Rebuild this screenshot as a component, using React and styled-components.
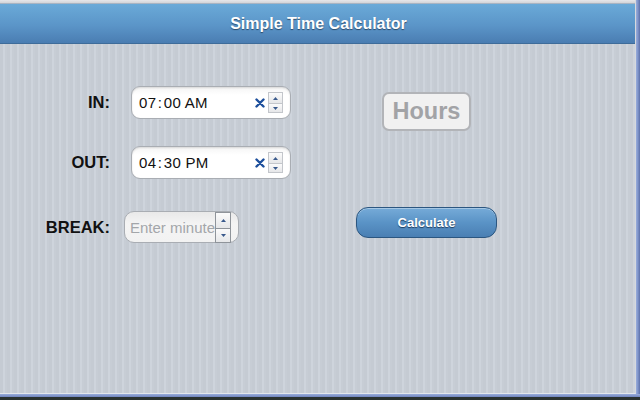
import React from "react";
import styled, { createGlobalStyle } from "styled-components";

const Global = createGlobalStyle`
  html, body { margin: 0; padding: 0; width: 640px; height: 400px; overflow: hidden; }
  body { font-family: "Liberation Sans", Arial, sans-serif; }
`;

const Page = styled.div`
  width: 640px;
  height: 400px;
  display: flex;
  flex-direction: column;
  background: #2c3433;
`;

const Window = styled.div`
  flex: 1;
  display: flex;
  min-height: 0;
`;

const Content = styled.div`
  flex: 1;
  display: flex;
  flex-direction: column;
  border-right: 1px solid #d6d9de;
  border-bottom: 1px solid #e4e7ec;
`;

const RightFrame = styled.div`
  width: 4px;
  background: linear-gradient(90deg, #9aaedb 0, #7d93c9 50%, #5d70a8 100%);
`;

const BottomFrame = styled.div`
  height: 3px;
  background: linear-gradient(180deg, #9aaedb, #6f83bd);
`;

const Taskbar = styled.div`
  height: 3px;
  background: #2a3230;
`;

const TopStrip = styled.div`
  height: 4px;
  background: linear-gradient(180deg, #e6e7e9, #d2d4d8);
  border-bottom: 1px solid #a8b4c2;
  box-sizing: border-box;
`;

const Header = styled.header`
  height: 40px;
  display: flex;
  align-items: center;
  justify-content: center;
  background: linear-gradient(180deg, #6aaad8 0%, #5b95c8 55%, #4a7db2 100%);
  border-bottom: 1px solid #3e6c9a;
  box-sizing: border-box;
  color: #fff;
  font-weight: bold;
  font-size: 16px;
  text-shadow: 0 1px 1px #2a4a6a;
  padding-left: 2px;
`;

const Body = styled.main`
  flex: 1;
  display: flex;
  background: repeating-linear-gradient(
    90deg,
    #c5cbd3 0px,
    #c5cbd3 3px,
    #ced4dc 3px,
    #ced4dc 5px,
    #c7cdd5 5px,
    #c7cdd5 7px
  );
`;

const Form = styled.div`
  display: flex;
  flex-direction: column;
  gap: 27px;
  padding-top: 42px;
`;

const Row = styled.div`
  display: flex;
  align-items: center;
  margin-top: ${(p) => p.$mt || 0}px;
`;

const Label = styled.label`
  width: 110px;
  text-align: right;
  font-weight: bold;
  font-size: 16.5px;
  color: #111;
  margin-right: ${(p) => p.$gap}px;
`;

const TimeBox = styled.div`
  width: 160px;
  height: 33px;
  box-sizing: border-box;
  border: 1px solid #a9adb3;
  border-radius: 9px;
  background: linear-gradient(180deg, #f4f4f4 0%, #ffffff 25%, #ffffff 100%);
  box-shadow: inset 0 1px 2px rgba(0, 0, 0, 0.12);
  display: flex;
  align-items: center;
  padding: 0 7px 0 7px;
`;

const TimeText = styled.span`
  flex: 1;
  font-size: 15px;
  color: #111;
  letter-spacing: 0.3px;
  white-space: pre;
`;

const Colon = styled.span`
  margin: 0 1.5px;
`;

const Clear = styled.svg`
  margin-right: 3px;
  flex: none;
`;

const Spinner = styled.div`
  display: flex;
  flex-direction: column;
  width: ${(p) => p.$w}px;
  border: 1px solid ${(p) => p.$border};
  box-sizing: border-box;
  background: #fff;
  flex: none;
`;

const SpinBtn = styled.div`
  height: ${(p) => p.$h}px;
  display: flex;
  align-items: center;
  justify-content: center;
  background: linear-gradient(180deg, #fbfbfb, #e6e7e9);
  border-top: ${(p) => (p.$sep ? `1px solid ${p.$sepColor}` : "none")};
  box-sizing: border-box;
`;

const Tri = ({ up }) => (
  <svg width="5" height="3" viewBox="0 0 5 3">
    <path d={up ? "M0 3 L2.5 0 L5 3 Z" : "M0 0 L2.5 3 L5 0 Z"} fill="#3a5a8c" />
  </svg>
);

const BreakBox = styled.div`
  width: 115px;
  height: 32px;
  box-sizing: border-box;
  border: 1px solid #a9adb3;
  border-radius: 10px;
  background: linear-gradient(180deg, #e9e9e9 0%, #f4f4f4 40%, #f2f2f2 100%);
  display: flex;
  align-items: center;
  padding: 0 7px 0 5px;
  margin-left: ${(p) => p.$shift}px;
`;

const Placeholder = styled.span`
  flex: 1;
  min-width: 0;
  font-size: 15px;
  color: #a3a6aa;
  white-space: nowrap;
  overflow: hidden;
`;

const Side = styled.div`
  display: flex;
  flex-direction: column;
  align-items: center;
  width: 141px;
  margin-left: 65px;
`;

const HoursBox = styled.div`
  margin-top: 48px;
  width: 89px;
  height: 39px;
  box-sizing: border-box;
  border: 2px solid #b2b4b8;
  border-radius: 7px;
  background: #f1f1f1;
  display: flex;
  align-items: center;
  justify-content: center;
  font-weight: bold;
  font-size: 23.5px;
  color: #a2a3a6;
`;

const CalcButton = styled.button`
  margin-top: 76px;
  width: 141px;
  height: 31px;
  border: 1px solid #2b5680;
  border-radius: 12px;
  background: linear-gradient(180deg, #76abd8 0%, #5a93c6 50%, #4a7fb3 100%);
  box-shadow: inset 0 1px 0 rgba(255, 255, 255, 0.35);
  color: #fff;
  font-family: "Liberation Sans", Arial, sans-serif;
  font-weight: bold;
  font-size: 13px;
  text-shadow: 0 1px 1px #1f3d5e;
  padding: 0;
`;

const TimeField = ({ h, m, ap }) => (
  <TimeBox>
    <TimeText>
      {h}
      <Colon>:</Colon>
      {m} {ap}
    </TimeText>
    <Clear width="10" height="10" viewBox="0 0 10 10">
      <path d="M1.5 1.5 L8.5 8.5 M8.5 1.5 L1.5 8.5" stroke="#1d4f9c" strokeWidth="2.4" strokeLinecap="round" />
    </Clear>
    <Spinner $w={15} $border="#c3c6cb">
      <SpinBtn $h={10}><Tri up /></SpinBtn>
      <SpinBtn $h={9} $sep $sepColor="#c3c6cb"><Tri /></SpinBtn>
    </Spinner>
  </TimeBox>
);

export default function App() {
  return (
    <Page>
      <Global />
      <Window>
        <Content>
          <TopStrip />
          <Header>Simple Time Calculator</Header>
          <Body>
            <Form>
              <Row>
                <Label $gap={21}>IN:</Label>
                <TimeField h="07" m="00" ap="AM" />
              </Row>
              <Row>
                <Label $gap={21}>OUT:</Label>
                <TimeField h="04" m="30" ap="PM" />
              </Row>
              <Row $mt={5}>
                <Label $gap={21}>BREAK:</Label>
                <BreakBox $shift={-7}>
                  <Placeholder>Enter minute</Placeholder>
                  <Spinner $w={16} $border="#8f949a">
                    <SpinBtn $h={15}><Tri up /></SpinBtn>
                    <SpinBtn $h={14} $sep $sepColor="#8f949a"><Tri /></SpinBtn>
                  </Spinner>
                </BreakBox>
              </Row>
            </Form>
            <Side>
              <HoursBox>Hours</HoursBox>
              <CalcButton>Calculate</CalcButton>
            </Side>
          </Body>
        </Content>
        <RightFrame />
      </Window>
      <BottomFrame />
      <Taskbar />
    </Page>
  );
}
